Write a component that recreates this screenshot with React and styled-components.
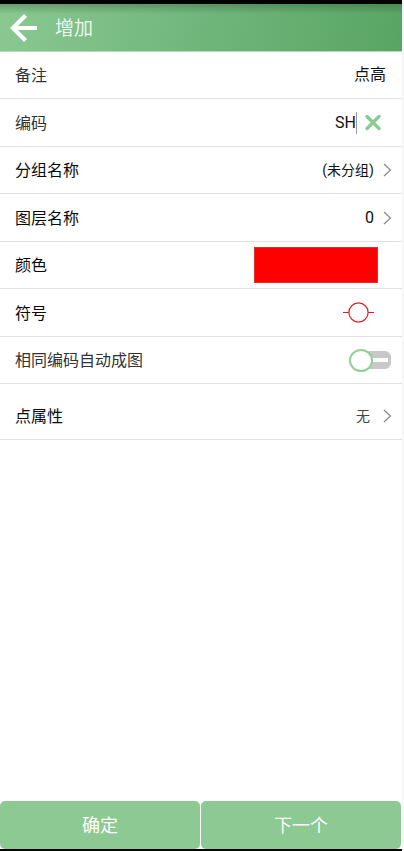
import { useState } from "react";
import styled, { createGlobalStyle } from "styled-components";

const GlobalStyle = createGlobalStyle`
  *,
  *::before,
  *::after {
    box-sizing: border-box;
  }

  body {
    margin: 0;
    background: #f7f7f7;
    font-family: Roboto, "Noto Sans CJK SC", sans-serif;
    color: #111;
  }

  button,
  input {
    margin: 0;
    padding: 0;
    border: 0;
    background: none;
    color: inherit;
    font-family: inherit;
  }
`;

const Screen = styled.div`
  display: flex;
  flex-direction: column;
  min-height: 100vh;
  margin-right: 2px;
  background: #fff;
  border-top: 4px solid #000;
  border-bottom: 2px solid #000;
`;

const Header = styled.header`
  display: flex;
  align-items: center;
  gap: 16px;
  height: 48px;
  padding-left: 8px;
  border-bottom: 1px solid #b5dcb9;
  background:
    linear-gradient(rgba(40, 80, 45, 0.35), rgba(40, 80, 45, 0) 10px),
    linear-gradient(100deg, #8bc892, #70b67b 50%, #58a563);
`;

const BackButton = styled.button`
  display: flex;
  width: 31px;
  height: 32px;
`;

const Title = styled.h1`
  margin: 0;
  padding-top: 2px;
  color: #f2faf3;
  font-size: 19px;
  font-weight: 350;
  line-height: 28px;
`;

const Form = styled.form`
  display: flex;
  flex: 1;
  flex-direction: column;
`;

const Row = styled.div`
  display: flex;
  align-items: center;
  justify-content: space-between;
  height: 47px;
  padding-left: 15px;
  padding-right: ${(props) => props.$right || 10}px;
  border-bottom: 1px solid #e2e2e2;

  &:nth-child(even) {
    height: 48px;
  }
`;

const Section = styled.section`
  margin-top: ${(props) => (props.$spaced ? 9 : 0)}px;
`;

const Label = styled.label`
  padding-top: 2px;
  color: ${(props) => (props.$soft ? "#333" : "#0a0a0a")};
  font-size: 16px;
  line-height: 24px;
  white-space: nowrap;
`;

const Field = styled.div`
  display: flex;
  flex: 1;
  align-items: center;
  justify-content: flex-end;
  min-width: 0;
`;

const TextInput = styled.input`
  flex: 1;
  width: 100%;
  min-width: 0;
  height: 24px;
  outline: none;
  font-size: 16px;
  line-height: 24px;
  text-align: right;
`;

const Caret = styled.span`
  width: 1px;
  height: 22px;
  background: #999;
`;

const ClearButton = styled.button`
  display: flex;
  margin-left: 8px;
`;

const PickerButton = styled.button`
  display: flex;
  align-items: center;
  gap: ${(props) => props.$gap || 9}px;
  color: ${(props) => props.$color || "#111"};
  font-size: ${(props) => props.$size || 14}px;
  line-height: 24px;
`;

const Swatch = styled.button`
  width: 124px;
  height: 36px;
  border: 1px solid #d33;
  background: #f00;
`;

const SymbolButton = styled.button`
  display: flex;
`;

const Switch = styled.input`
  display: flex;
  align-items: center;
  width: 42px;
  height: 24px;
  appearance: none;

  &::before {
    content: "";
    z-index: 1;
    flex: none;
    width: 24px;
    height: 23px;
    border: 2px solid #93cf9b;
    border-radius: 50%;
    background: #fff;
  }

  &::after {
    content: "";
    flex: none;
    width: 29px;
    height: 18px;
    margin-left: -11px;
    border: solid #c8c8c8;
    border-width: 7px 3px 7px 11px;
    border-radius: 6px;
    background: #fff;
  }

  &:checked {
    flex-direction: row-reverse;
  }

  &:checked::after {
    margin: 0 -11px 0 0;
    border-color: #93cf9b;
    border-width: 7px 11px 7px 3px;
  }
`;

const Footer = styled.footer`
  display: grid;
  grid-template-columns: 1fr 1fr;
  gap: 1px;
  padding-right: 1px;
`;

const FooterButton = styled.button`
  height: 48px;
  padding-top: 2px;
  border-radius: 5px;
  background: #8dc993;
  color: #fff;
  font-size: 18px;
  line-height: 24px;
`;

function BackIcon() {
  return (
    <svg width="31" height="32" viewBox="0 0 31 32" fill="none" stroke="#fff" strokeWidth="4.2">
      <path d="M17.5 3.5 5 16 17.5 28.5M5 16H29" />
    </svg>
  );
}

function ClearIcon() {
  return (
    <svg width="16" height="16" viewBox="0 0 16 16" fill="none" stroke="#8bcb93" strokeWidth="3.4" strokeLinecap="round">
      <path d="M2 1.5l12 12M14 1.5l-12 12" />
    </svg>
  );
}

function Chevron() {
  return (
    <svg width="9" height="14" viewBox="0 0 9 14" fill="none" stroke="#8c8c8c" strokeWidth="1.3">
      <path d="M1 1l6.5 6L1 13" />
    </svg>
  );
}

function PointSymbol() {
  return (
    <svg width="32" height="22" viewBox="0 0 32 22" fill="none" stroke="#e02020" strokeWidth="1.2">
      <circle cx="16.5" cy="10.5" r="9.6" />
      <path d="M1 10.5h6M26 10.5h6" />
    </svg>
  );
}

function App() {
  const [remark, setRemark] = useState("点高");
  const [code, setCode] = useState("SH");
  const [autoDraw, setAutoDraw] = useState(false);

  return (
    <>
      <GlobalStyle />
      <Screen>
        <Header>
          <BackButton type="button" aria-label="返回">
            <BackIcon />
          </BackButton>
          <Title>增加</Title>
        </Header>

        <Form onSubmit={(e) => e.preventDefault()}>
          <Section>
            <Row $right={16}>
              <Label htmlFor="remark" $soft>备注</Label>
              <Field>
                <TextInput id="remark" value={remark} onChange={(e) => setRemark(e.target.value)} />
              </Field>
            </Row>
            <Row $right={21}>
              <Label htmlFor="code" $soft>编码</Label>
              <Field>
                <TextInput id="code" value={code} onChange={(e) => setCode(e.target.value)} />
                <Caret />
                <ClearButton type="button" aria-label="清除" onClick={() => setCode("")}>
                  <ClearIcon />
                </ClearButton>
              </Field>
            </Row>
            <Row>
              <Label htmlFor="group">分组名称</Label>
              <PickerButton type="button" id="group">
                (未分组)
                <Chevron />
              </PickerButton>
            </Row>
            <Row>
              <Label htmlFor="layer">图层名称</Label>
              <PickerButton type="button" id="layer" $size={16}>
                0
                <Chevron />
              </PickerButton>
            </Row>
            <Row $right={24}>
              <Label htmlFor="color">颜色</Label>
              <Swatch type="button" id="color" />
            </Row>
            <Row $right={28}>
              <Label htmlFor="symbol">符号</Label>
              <SymbolButton type="button" id="symbol">
                <PointSymbol />
              </SymbolButton>
            </Row>
            <Row $right={11}>
              <Label htmlFor="autoDraw" $soft>相同编码自动成图</Label>
              <Switch
                type="checkbox"
                id="autoDraw"
                checked={autoDraw}
                onChange={(e) => setAutoDraw(e.target.checked)}
              />
            </Row>
          </Section>

          {/* Point attributes */}
          <Section $spaced>
            <Row>
              <Label htmlFor="attributes">点属性</Label>
              <PickerButton type="button" id="attributes" $gap={13} $color="#444">
                无
                <Chevron />
              </PickerButton>
            </Row>
          </Section>
        </Form>

        <Footer>
          <FooterButton type="button">确定</FooterButton>
          <FooterButton type="button">下一个</FooterButton>
        </Footer>
      </Screen>
    </>
  );
}

export default App;
